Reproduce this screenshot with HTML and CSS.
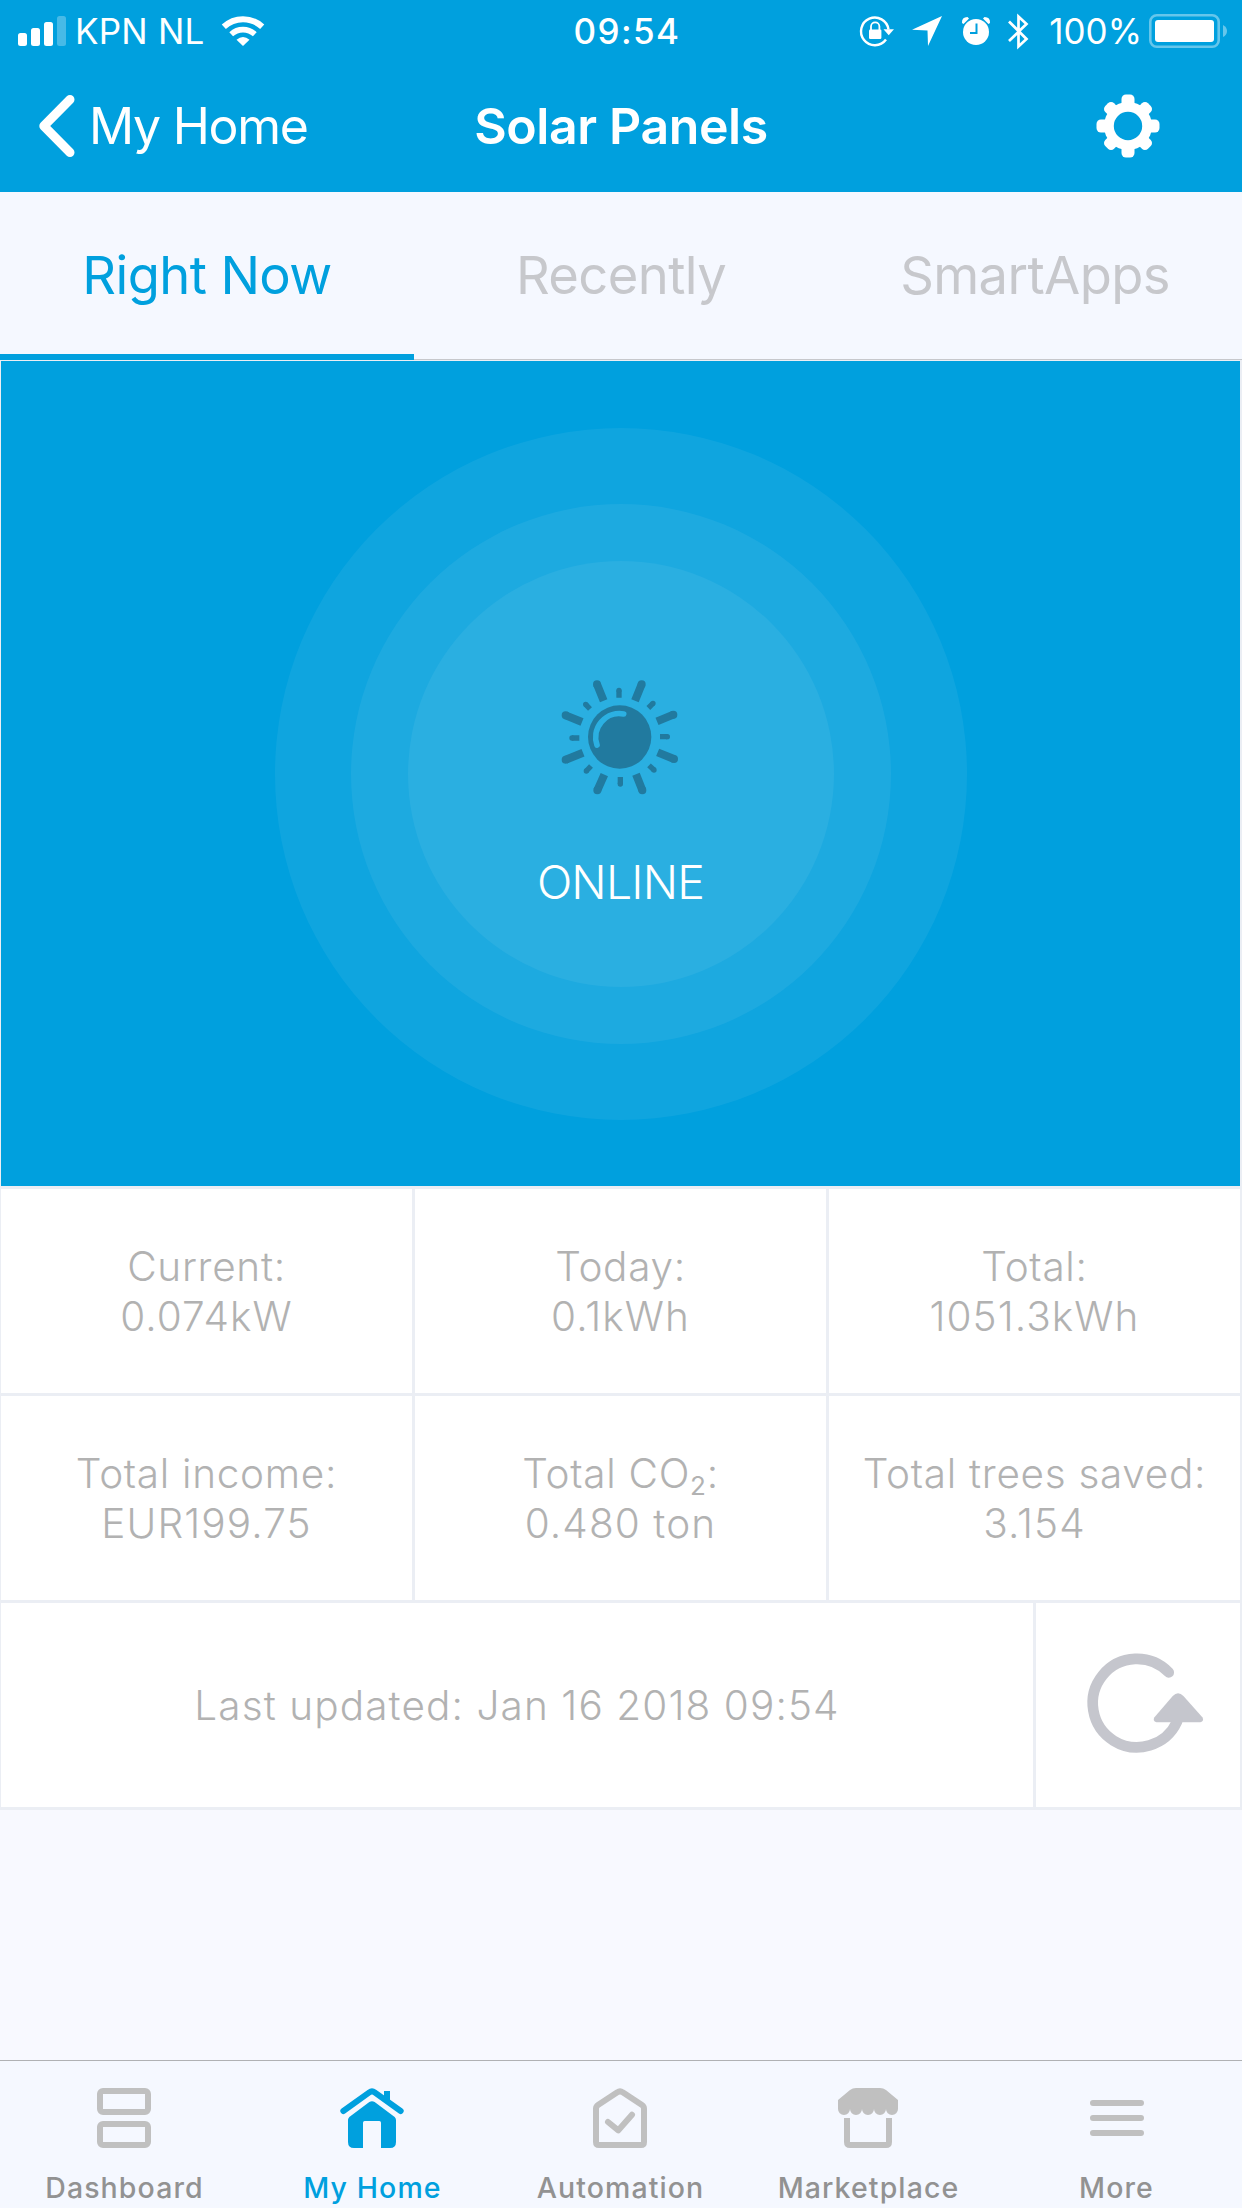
FILE: index.html
```html
<!DOCTYPE html>
<html lang="en">
<head>
<meta charset="utf-8">
<title>Solar Panels</title>
<link rel="stylesheet" href="styles.css">
</head>
<body>
<header class="top">
  <div class="status">
    <div class="status-left">
      <svg class="signal" viewBox="0 0 48 30"><rect y="17" width="9" height="13" rx="2.5"/><rect x="13" y="12" width="9" height="18" rx="2.5"/><rect x="26" y="6" width="9" height="24" rx="2.5"/><rect x="39" width="9" height="30" rx="2.5" opacity=".28"/></svg>
      <span class="carrier">KPN NL</span>
      <svg class="wifi" viewBox="0 0 42 30"><g fill="none" stroke="#fff"><path d="M1.8 10.8A28 28 0 0 1 40.2 10.8" stroke-width="6"/><path d="M9.2 18.2A17.5 17.5 0 0 1 32.8 18.2" stroke-width="5.6"/></g><path d="M14.5 23.8Q21 18.4 27.500 23.8L21 30z"/></svg>
    </div>
    <span class="clock">09:54</span>
    <div class="status-right">
      <svg class="lock" viewBox="0 0 34 30"><path d="M28.500 13.500A13.800 13.800 0 1 0 26 23.500" fill="none" stroke="#fff" stroke-width="2.400"/><path d="M23.500 13.300h10.500l-5.300 6z"/><rect x="9" y="13.500" width="12.400" height="9.500" rx="1.200"/><path d="M11 14v-3.500a4.200 4.200 0 0 1 8.400 0V14" fill="none" stroke="#fff" stroke-width="1.800"/></svg>
      <svg class="arrow" viewBox="0 0 30 30"><path d="M30 0L16 30 15.500 14.500 0 13.800z"/></svg>
      <svg class="alarm" viewBox="0 0 28 28"><circle cx="14" cy="15" r="13"/><path d="M0 6Q-.5 0 5.500 0L7 1.500 1.500 7zM28 6Q28.500 0 22.500 0L21 1.500 26.500 7z"/><path d="M14.500 6.500v9.500H8" fill="none" stroke="#00a0de" stroke-width="2"/></svg>
      <svg class="bluetooth" viewBox="0 0 21 37"><path d="M1 8.500L18.500 26 10.500 33.500V3.500L18.500 11 1 28" fill="none" stroke="#fff" stroke-width="2.700"/></svg>
      <span class="percent">100%</span>
      <svg class="battery" viewBox="0 0 78 34"><rect x="1.300" y="1.300" width="68.400" height="31.400" rx="6.500" fill="none" stroke="#fff" stroke-width="2.600" opacity=".4"/><rect x="6" y="6" width="59" height="22" rx="3"/><path d="M74 11q4 2 4 6t-4 6z" opacity=".4"/></svg>
    </div>
  </div>
  <nav class="navbar">
    <div class="back">
      <svg viewBox="0 0 38 64"><path d="M32 5.500L5.800 32 32 58.500" fill="none" stroke="#fff" stroke-width="9" stroke-linecap="round" stroke-linejoin="round"/></svg>
      <span>My Home</span>
    </div>
    <h1>Solar Panels</h1>
    <svg class="gear" viewBox="-32 -32 64 64">
      <g id="teeth"><rect x="-6.500" y="-31.500" width="13" height="63" rx="4.500"/><rect x="-31.500" y="-6.500" width="63" height="13" rx="4.500"/></g>
      <use href="#teeth" transform="rotate(45) scale(.96)"/>
      <circle r="24"/>
      <circle r="14.200" fill="#00a0de"/>
    </svg>
  </nav>
</header>

<nav class="tabs">
  <span class="tab active">Right Now</span>
  <span class="tab">Recently</span>
  <span class="tab">SmartApps</span>
</nav>

<main>
  <section class="hero">
    <div class="ring outer"><div class="ring middle"><div class="ring inner">
      <svg class="sun" viewBox="120 85 360 360">
        <g fill="none" stroke="#217a9f">
          <g stroke-width="24">
            <path d="M251 153L231 104M345 153L365 104M411 215L460 195M413 308L462 328M348 374L367 422M253 375L232 422M189 309L137 330M186 217L137 197"/>
            <path stroke-linecap="round" d="M231 104h0M365 104h0M460 195h0M462 328h0M367 422h0M232 422h0M137 330h0M137 197h0"/>
          </g>
          <g stroke-width="16">
            <path d="M297 144V122M420 261H442M301 382V403M178 265H156M385 175L399 161M210 178L197 164M213 349L199 364M387 347L402 361"/>
            <path stroke-linecap="round" d="M297 122h0M442 261h0M301 403h0M156 265h0M399 161h0M197 164h0M199 364h0M402 361h0"/>
          </g>
        </g>
        <circle cx="299" cy="262" r="95" fill="#217a9f"/>
        <path d="M311 193A71 71 0 0 0 231 286" fill="none" stroke="#2bb0e2" stroke-width="17" stroke-linecap="round"/>
      </svg>
      <span class="state">ONLINE</span>
    </div></div></div>
  </section>

  <section class="stats">
    <div class="cell">Current:<br><span class="value">0.074kW</span></div>
    <div class="cell">Today:<br><span class="value">0.1kWh</span></div>
    <div class="cell">Total:<br><span class="value">1051.3kWh</span></div>
    <div class="cell">Total income:<br><span class="value">EUR199.75</span></div>
    <div class="cell">Total CO<sub>2</sub>:<br><span class="value">0.480 ton</span></div>
    <div class="cell">Total trees saved:<br><span class="value">3.154</span></div>
  </section>
  <section class="updated">
    <div class="cell"><span class="value">Last updated: Jan 16 2018 09:54</span></div>
    <div class="cell">
      <svg class="refresh" viewBox="261 218 352 300"><path d="M507 276A133 133 0 1 0 532 424" fill="none" stroke="#c5c6cd" stroke-width="32" stroke-linecap="round"/><path d="M519 347Q535 331 551 347L608 411Q615 422 602 426H470Q457 422 464 411z" fill="#c5c6cd"/></svg>
    </div>
  </section>
</main>

<footer class="bottom">
  <div class="item">
    <svg viewBox="282 144 180 180"><g fill="none" stroke="#c0c0c0" stroke-width="18"><rect x="300" y="153" width="144" height="63" rx="9"/><rect x="300" y="252" width="144" height="63" rx="9"/></g></svg>
    <span>Dashboard</span>
  </div>
  <div class="item current">
    <svg class="wide" viewBox="1020 144 192 180"><path d="M1030 213L1108 157Q1116 151 1124 157L1202 213" fill="none" stroke="#00a0de" stroke-width="18" stroke-linecap="round"/><path d="M1152 153h18v35l-18-13z"/><path d="M1062 324h27v-76q0-5 5-5h44q5 0 5 5v76h27q18 0 18-18v-66q0-5-4-9l-60-45q-8-5-16 0l-60 45q-4 4-4 9v66q0 18 18 18z"/></svg>
    <span>My Home</span>
  </div>
  <div class="item">
    <svg viewBox="330 144 180 180"><g fill="none" stroke="#c0c0c0" stroke-width="18" stroke-linejoin="round"><path d="M348 206Q348 199 354 195L412 157Q420 151 428 157L486 195Q492 199 492 206V306Q492 315 483 315H357Q348 315 348 306z"/><path d="M384 246L415 271 456 224" stroke-linecap="round"/></g></svg>
    <span>Automation</span>
  </div>
  <div class="item">
    <svg viewBox="1074 144 180 180"><path fill="#c0c0c0" d="M1074 180L1110 150Q1118 144 1128 144H1200Q1210 144 1218 150L1254 180V207a18 18 0 0 1-36 0a18 18 0 0 1-36 0a18 18 0 0 1-36 0a18 18 0 0 1-36 0a18 18 0 0 1-36 0z"/><path d="M1101 234V306Q1101 315 1110 315H1218Q1227 315 1227 306V234" fill="none" stroke="#c0c0c0" stroke-width="18"/></svg>
    <span>Marketplace</span>
  </div>
  <div class="item">
    <svg viewBox="0 0 60 60"><path d="M7 15H55M7 30H55M7 45H55" fill="none" stroke="#c0c0c0" stroke-width="6" stroke-linecap="round"/></svg>
    <span>More</span>
  </div>
</footer>
</body>
</html>
```
FILE: styles.css
```css
* { box-sizing: border-box; }
body {
  margin: 0;
  width: 1242px;
  height: 2208px;
  display: flex;
  flex-direction: column;
  background: #f8f9ff;
  font-family: Inter, "Liberation Sans", sans-serif;
}
svg { display: block; flex: none; overflow: visible; }
span, h1 { white-space: nowrap; }

/* status bar + title */
.top { height: 192px; background: #00a0de; color: #fff; fill: #fff; }
.status {
  height: 62px;
  display: grid;
  grid-template-columns: 1fr auto 1fr;
  align-items: center;
  padding: 0 15px 0 18px;
  font-size: 35px;
}
.status-left, .status-right { display: flex; align-items: center; }
.status-right { justify-content: flex-end; }
.signal { width: 48px; height: 30px; margin-right: 9px; }
.carrier { margin-right: 18px; letter-spacing: .2px; }
.wifi { width: 42px; height: 30px; }
.clock { padding-left: 9px; font-weight: 500; letter-spacing: 1.4px; }
.lock { width: 34px; height: 30px; margin-right: 18px; }
.arrow { width: 30px; height: 30px; margin-right: 20px; }
.alarm { width: 28px; height: 28px; margin-right: 18px; }
.bluetooth { width: 21px; height: 37px; margin-right: 20px; }
.percent { margin-right: 7px; }
.battery { width: 78px; height: 34px; }

.navbar {
  height: 130px;
  display: grid;
  grid-template-columns: 1fr auto 1fr;
  align-items: center;
  padding: 0 38px 2px 38px;
}
.back { display: flex; align-items: center; font-size: 50px; letter-spacing: -1.3px; }
.back svg { width: 38px; height: 64px; margin-right: 13px; }
.navbar h1 { margin: 0; font-size: 50px; font-weight: 600; letter-spacing: -.4px; }
.gear { width: 64px; height: 64px; justify-self: end; margin-right: 44px; }

.tabs {
  height: 168px;
  display: grid;
  grid-template-columns: repeat(3, 414px);
  grid-template-rows: 168px;
  background: #f5f8ff;
}
.tab {
  padding-top: 4px;
  border-bottom: 1px solid #c7c8cc;
  color: #c7c8cc;
  font-size: 52.5px;
  letter-spacing: -.6px;
  line-height: 158px;
  text-align: center;
}
.tab.active { border-bottom: 6px solid #00a0de; color: #00a0de; }

/* device state */
main { padding: 1px 2px 0 1px; background: #ebeef4; }
.hero {
  height: 825px;
  display: flex;
  align-items: center;
  justify-content: center;
  background: #00a0de;
}
.ring {
  display: flex;
  flex: none;
  align-items: center;
  justify-content: center;
  border-radius: 50%;
  background: rgba(255, 255, 255, .06);
}
.outer { width: 692px; height: 692px; }
.middle { width: 540px; height: 540px; }
.inner { width: 426px; height: 426px; flex-direction: column; }
.sun { width: 120px; height: 120px; margin: 40px 2px 56px 0; }
.state { color: #fff; font-size: 46.5px; font-weight: 300; letter-spacing: -.8px; line-height: 56px; }

.stats, .updated {
  display: grid;
  gap: 3px;
  padding-top: 3px;
}
.stats { grid-template-columns: 411px 411px 1fr; grid-auto-rows: 204px; }
.updated { grid-template-columns: 1032px 1fr; grid-auto-rows: 204px; padding-bottom: 3px; }
.cell {
  padding-top: 53px;
  background: #fff;
  color: #b2b2b2;
  font-size: 40.5px;
  font-weight: 300;
  letter-spacing: .7px;
  line-height: 50px;
  text-align: center;
}
.value { letter-spacing: 1.1px; }
.updated .cell { padding-top: 78px; }
.updated .cell:last-child { padding: 50px 0 0 51px; }
.cell sub { font-size: 26px; font-weight: 400; line-height: 0; vertical-align: -7px; }
.refresh { width: 117px; height: 100px; }

.bottom {
  height: 148px;
  margin-top: auto;
  padding-top: 27px;
  display: grid;
  grid-template-columns: repeat(5, 248px);
  border-top: 1px solid #b0b1b4;
  background: #f5f8ff;
}
.item {
  display: flex;
  flex-direction: column;
  align-items: center;
  color: #929292;
  font-size: 28.5px;
  font-weight: 500;
  letter-spacing: 1.1px;
}
.item svg { width: 60px; height: 60px; }
.item .wide { width: 64px; }
.item span { margin: 22px 0 0 1px; line-height: 36px; }
.item.current { color: #00a0de; fill: #00a0de; }
```
